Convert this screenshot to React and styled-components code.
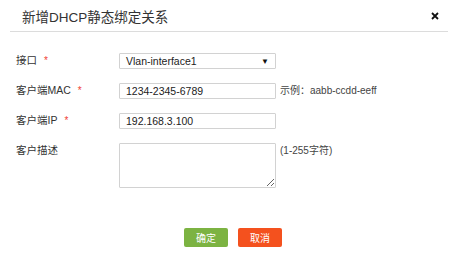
import React from 'react';
import styled, { createGlobalStyle } from 'styled-components';

const GlobalStyle = createGlobalStyle`
  body {
    margin: 0;
    background: #fff;
    font-family: "Liberation Sans", "Noto Sans CJK SC", sans-serif;
  }
`;

const Dialog = styled.div`
  width: 454px;
  height: 260px;
  background: #fff;
  display: flex;
  flex-direction: column;
  box-sizing: border-box;
`;

const Header = styled.div`
  height: 32px;
  margin: 0 6px 0 10px;
  padding: 0 9px 0 12px;
  border-bottom: 1px solid #dcdcdc;
  display: flex;
  align-items: center;
  justify-content: space-between;
  box-sizing: border-box;
`;

const Title = styled.div`
  font-size: 13.5px;
  color: #333;
  padding-top: 1px;
`;

const Close = styled.svg`
  width: 8px;
  height: 8px;
  cursor: pointer;
`;

const Form = styled.div`
  display: flex;
  flex-direction: column;
  gap: 14px;
  padding: 21px 0 0 16px;
`;

const Row = styled.div`
  display: flex;
  align-items: flex-start;
`;

const Label = styled.div`
  width: 103px;
  font-size: 10.5px;
  color: #333;
  line-height: 12px;
  padding-top: 1px;
`;

const Star = styled.span`
  color: #f04134;
  margin-left: 7px;
  font-size: 10px;
`;

const fieldBase = `
  width: 157px;
  box-sizing: border-box;
  border: 1px solid #d2d2d2;
  border-radius: 1px;
  background: #fff;
  font-family: "Liberation Sans", "Noto Sans CJK SC", sans-serif;
  font-size: 10.5px;
  color: #222;
`;

const Select = styled.div`
  ${fieldBase}
  height: 16px;
  display: flex;
  align-items: center;
  justify-content: space-between;
  padding: 0 6px 0 6px;
`;

const Arrow = styled.span`
  font-size: 8px;
  color: #111;
`;

const Input = styled.input`
  ${fieldBase}
  height: 16px;
  padding: 0 6px;
  outline: none;
`;

const TextArea = styled.textarea`
  ${fieldBase}
  height: 45px;
  padding: 2px 6px;
  outline: none;
  resize: both;
`;

const Hint = styled.div`
  font-size: 10px;
  color: #444;
  margin-left: 4px;
  line-height: 16px;
`;

const Footer = styled.div`
  display: flex;
  gap: 10px;
  padding: 40px 0 0 184px;
`;

const Button = styled.button`
  width: 44px;
  height: 19px;
  border: none;
  border-radius: 2px;
  background: ${p => (p.danger ? '#f4511e' : '#7cb342')};
  color: #fff;
  font-family: "Noto Sans CJK SC", sans-serif;
  font-size: 10px;
  padding: 0;
  cursor: pointer;
`;

export default function App() {
  return (
    <Dialog>
      <GlobalStyle />
      <Header>
        <Title>新增DHCP静态绑定关系</Title>
        <Close viewBox="0 0 8 8">
          <path d="M1 1L7 7M7 1L1 7" stroke="#111" strokeWidth="1.8" />
        </Close>
      </Header>
      <Form>
        <Row>
          <Label>接口<Star>*</Star></Label>
          <Select>
            <span>Vlan-interface1</span>
            <Arrow>▼</Arrow>
          </Select>
        </Row>
        <Row>
          <Label>客户端MAC<Star>*</Star></Label>
          <Input defaultValue="1234-2345-6789" />
          <Hint>示例：aabb-ccdd-eeff</Hint>
        </Row>
        <Row>
          <Label>客户端IP<Star>*</Star></Label>
          <Input defaultValue="192.168.3.100" />
        </Row>
        <Row>
          <Label>客户描述</Label>
          <TextArea />
          <Hint>(1-255字符)</Hint>
        </Row>
      </Form>
      <Footer>
        <Button>确定</Button>
        <Button danger>取消</Button>
      </Footer>
    </Dialog>
  );
}
